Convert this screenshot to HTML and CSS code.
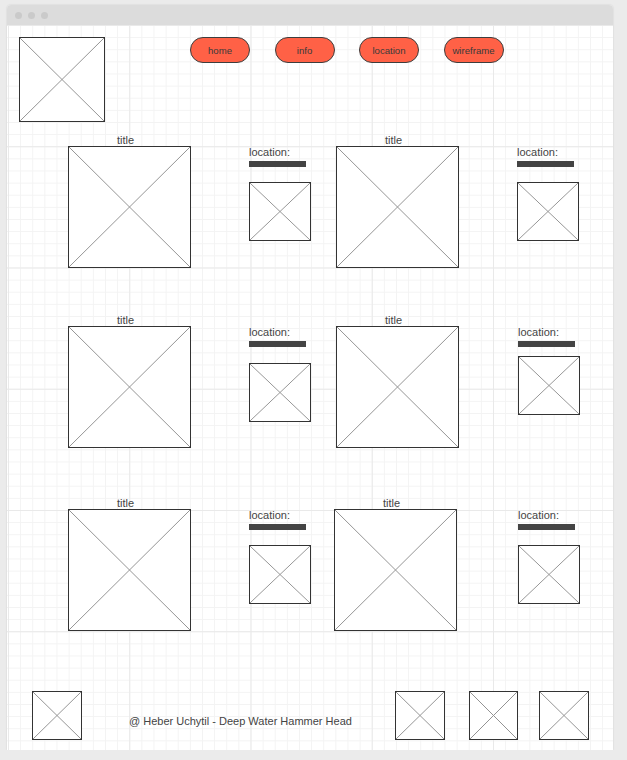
FILE: index.html
```html
<!DOCTYPE html>
<html lang="en">
<head>
<meta charset="utf-8">
<title>Deep Water Hammer Head - wireframe</title>
<link rel="stylesheet" href="styles.css">
</head>
<body>
<div class="window">
  <div class="titlebar">
    <span class="dot"></span><span class="dot"></span><span class="dot"></span>
  </div>
  <div class="canvas">
    <header class="header">
      <div class="ph logo"></div>
      <nav class="nav">
        <a class="btn">home</a>
        <a class="btn">info</a>
        <a class="btn">location</a>
        <a class="btn btn-wide">wireframe</a>
      </nav>
    </header>

    <main class="rows">
      <section class="row">
        <div class="card">
          <div class="card-title">title</div>
          <div class="ph big"></div>
        </div>
        <div class="side">
          <div class="loc">location:</div>
          <div class="bar"></div>
          <div class="ph small"></div>
        </div>
        <div class="card card-2">
          <div class="card-title">title</div>
          <div class="ph big"></div>
        </div>
        <div class="side">
          <div class="loc">location:</div>
          <div class="bar"></div>
          <div class="ph small"></div>
        </div>
      </section>

      <section class="row">
        <div class="card">
          <div class="card-title">title</div>
          <div class="ph big"></div>
        </div>
        <div class="side">
          <div class="loc">location:</div>
          <div class="bar"></div>
          <div class="ph small small-low"></div>
        </div>
        <div class="card card-2">
          <div class="card-title">title</div>
          <div class="ph big"></div>
        </div>
        <div class="side side-r">
          <div class="loc">location:</div>
          <div class="bar"></div>
          <div class="ph small small-high"></div>
        </div>
      </section>

      <section class="row row-3">
        <div class="card">
          <div class="card-title">title</div>
          <div class="ph big"></div>
        </div>
        <div class="side">
          <div class="loc">location:</div>
          <div class="bar"></div>
          <div class="ph small"></div>
        </div>
        <div class="card card-2 card-left">
          <div class="card-title">title</div>
          <div class="ph big"></div>
        </div>
        <div class="side side-far">
          <div class="loc">location:</div>
          <div class="bar"></div>
          <div class="ph small"></div>
        </div>
      </section>
    </main>

    <footer class="footer">
      <div class="ph fbox"></div>
      <p class="credit">@ Heber Uchytil - Deep Water Hammer Head</p>
      <div class="social">
        <div class="ph fbox"></div>
        <div class="ph fbox fbox-mid"></div>
        <div class="ph fbox fbox-last"></div>
      </div>
    </footer>
  </div>
</div>
</body>
</html>
```

FILE: styles.css
```css
* { box-sizing: border-box; }

body {
  margin: 0;
  background: #ebebeb;
  font-family: "Liberation Sans", Arial, sans-serif;
  color: #444;
}

.window {
  margin: 5px 0 0 7px;
  width: 606px;
  height: 745px;
  background: #fff;
  border-radius: 4px 4px 0 0;
  box-shadow: 0 0 2px rgba(0, 0, 0, 0.14);
  display: flex;
  flex-direction: column;
}

.titlebar {
  height: 20px;
  flex: none;
  background: #dcdcdc;
  border-radius: 4px 4px 0 0;
  display: flex;
  align-items: center;
  gap: 6px;
  padding-left: 8px;
}

.dot {
  width: 7px;
  height: 7px;
  border-radius: 50%;
  background: #cacaca;
}

.canvas {
  flex: 1;
  padding-top: 12px;
  background-color: #fff;
  background-image:
    linear-gradient(#e9e9e9 1px, transparent 1px),
    linear-gradient(90deg, #e9e9e9 1px, transparent 1px),
    linear-gradient(#f3f3f3 1px, transparent 1px),
    linear-gradient(90deg, #f3f3f3 1px, transparent 1px);
  background-size: 121.25px 121.25px, 121.25px 121.25px, 12.125px 12.125px, 12.125px 12.125px;
  background-position: 1px 0, 1px 0, 1px 0, 1px 0;
}

/* placeholder image box */
.ph {
  border: 1px solid #333;
  background:
    linear-gradient(to top right, transparent calc(50% - 0.7px), #939393 50%, transparent calc(50% + 0.7px)),
    linear-gradient(to bottom right, transparent calc(50% - 0.7px), #939393 50%, transparent calc(50% + 0.7px)),
    #fff;
}

.header {
  display: flex;
  align-items: flex-start;
  padding-left: 12px;
}

.logo {
  width: 86px;
  height: 85px;
  flex: none;
}

.nav {
  display: flex;
  gap: 24.5px;
  margin-left: 85px;
}

.btn {
  width: 60px;
  height: 26px;
  border: 1px solid #3d3d3d;
  border-radius: 13px;
  background: #ff6146;
  color: #3a3a3a;
  font-size: 9.6px;
  display: flex;
  align-items: center;
  justify-content: center;
}

.rows {
  margin-top: 12px;
  display: flex;
  flex-direction: column;
}

.row {
  display: flex;
  align-items: flex-start;
  padding-left: 61px;
}

.row + .row { margin-top: 46px; }
.row.row-3 { margin-top: 49px; }

.card {
  width: 123px;
  display: flex;
  flex-direction: column;
  align-items: center;
}

.card-2 { margin-left: 25px; }
.card-left { margin-left: 23px; }

.card-title {
  margin-right: 8px;
  font-size: 11px;
  line-height: 12px;
  color: #444;
}

.big {
  width: 123px;
  height: 122px;
}

.side {
  width: 62px;
  margin-left: 58px;
  padding-top: 12px;
}

.side-r { margin-left: 59px; }
.side-far { margin-left: 61px; }

.loc {
  font-size: 11px;
  line-height: 12px;
  color: #444;
}

.bar {
  width: 57px;
  height: 6px;
  margin-top: 3px;
  background: #444;
}

.small {
  width: 62px;
  height: 59px;
  margin-top: 15px;
}

.small-low { margin-top: 16px; }
.small-high { margin-top: 9px; }

.footer {
  display: flex;
  align-items: flex-start;
  margin-top: 60px;
  padding-left: 25px;
}

.fbox {
  width: 50px;
  height: 49px;
  flex: none;
}

.credit {
  margin: 24px 0 0 47px;
  font-size: 11px;
  line-height: 12px;
  color: #444;
}

.social {
  display: flex;
  margin-left: auto;
  margin-right: 24px;
}

.fbox-mid { margin-left: 24px; width: 49px; }
.fbox-last { margin-left: 21px; }
```
